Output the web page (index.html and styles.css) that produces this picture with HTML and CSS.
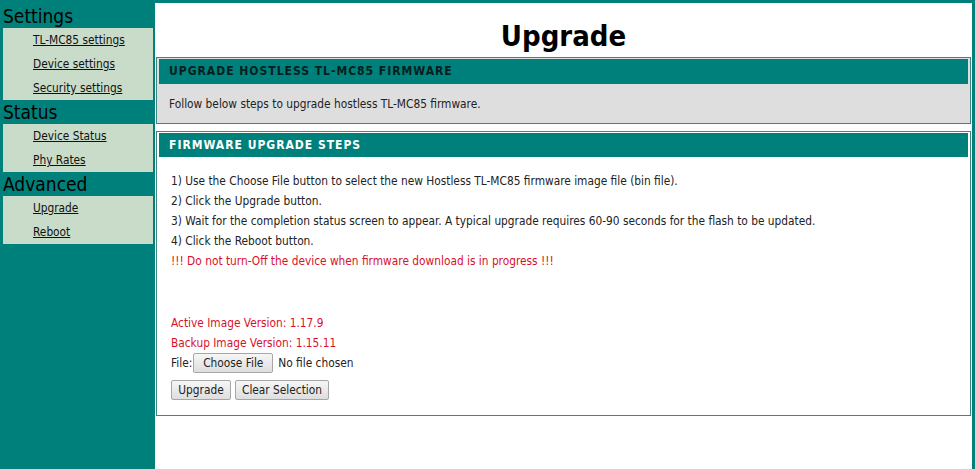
FILE: index.html
```html
<!DOCTYPE html>
<html lang="en">
<head>
<meta charset="utf-8">
<title>Upgrade</title>
<link rel="stylesheet" href="styles.css">
</head>
<body>
<div class="page">
  <nav class="nav">
    <div class="nav-head">Settings</div>
    <ul class="nav-list">
      <li><a href="#">TL-MC85 settings</a></li>
      <li><a href="#">Device settings</a></li>
      <li><a href="#">Security settings</a></li>
    </ul>
    <div class="nav-head">Status</div>
    <ul class="nav-list">
      <li><a href="#">Device Status</a></li>
      <li><a href="#">Phy Rates</a></li>
    </ul>
    <div class="nav-head">Advanced</div>
    <ul class="nav-list">
      <li><a href="#">Upgrade</a></li>
      <li><a href="#">Reboot</a></li>
    </ul>
  </nav>
  <main class="main">
    <h1 class="title">Upgrade</h1>
    <section class="box box-gray">
      <div class="box-head dark">UPGRADE HOSTLESS TL-MC85 FIRMWARE</div>
      <div class="box-body intro">Follow below steps to upgrade hostless TL-MC85 firmware.</div>
    </section>
    <section class="box">
      <div class="box-head">FIRMWARE UPGRADE STEPS</div>
      <div class="box-body steps">
        <p class="line">1) Use the Choose File button to select the new Hostless TL-MC85 firmware image file (bin file).</p>
        <p class="line">2) Click the Upgrade button.</p>
        <p class="line">3) Wait for the completion status screen to appear. A typical upgrade requires 60-90 seconds for the flash to be updated.</p>
        <p class="line">4) Click the Reboot button.</p>
        <p class="line red">!!! Do not turn-Off the device when firmware download is in progress !!!</p>
        <p class="line red gap">Active Image Version: 1.17.9</p>
        <p class="line red">Backup Image Version: 1.15.11</p>
        <div class="line file-row">
          <span>File:</span>
          <button class="btn btn-choose" type="button">Choose File</button>
          <span class="nofile">No file chosen</span>
        </div>
        <div class="actions">
          <button class="btn btn-up" type="button">Upgrade</button>
          <button class="btn btn-clear" type="button">Clear Selection</button>
        </div>
      </div>
    </section>
  </main>
</div>
</body>
</html>
```
FILE: styles.css
```css
html, body {
  margin: 0;
  padding: 0;
  height: 100%;
}
body {
  background: #00807b;
  font-family: "DejaVu Sans Condensed", "DejaVu Sans", sans-serif;
  color: #222;
  overflow: hidden;
}
.page {
  display: flex;
  height: 469px;
  padding: 0 3px 0 3px;
  gap: 2px;
}
.nav {
  width: 150px;
  flex: none;
  padding-top: 4px;
}
.nav-head {
  height: 24px;
  line-height: 25px;
  font-size: 19px;
  color: #000;
  margin-left: -3px;
  padding-left: 3px;
}
.nav-list {
  list-style: none;
  margin: 0;
  padding: 0;
  background: #c9dcc9;
}
.nav-list li {
  height: 24px;
  line-height: 24px;
  padding-left: 30px;
  font-size: 11.8px;
}
.nav-list a {
  color: #111;
  text-decoration: underline;
}
.main {
  flex: 1;
  margin-top: 3px;
  background: #fff;
  padding: 0 1px;
}
.title {
  margin: 0;
  padding-top: 16px;
  height: 34px;
  line-height: 34px;
  text-align: center;
  font-size: 29px;
  font-weight: bold;
  color: #000;
  margin-bottom: 4px;
}
.box {
  border: 1px solid #3d8580;
  padding: 1px;
  margin-bottom: 7px;
  background: #fff;
}
.box-gray {
  background: #dedede;
}
.box-head {
  height: 24px;
  line-height: 24px;
  background: #00807b;
  color: #fff;
  font-weight: bold;
  font-size: 12px;
  letter-spacing: 1px;
  padding-left: 10px;
  margin: 0 1px;
}
.box-gray .box-head {
  height: 25px;
  line-height: 25px;
}
.box-head.dark {
  color: #04201f;
}
.box-body {
  font-size: 11.8px;
  padding-left: 11px;
}
.intro {
  height: 38px;
  line-height: 40px;
  padding-left: 11px;
}
.steps {
  padding-top: 14px;
  padding-bottom: 14px;
  padding-left: 13px;
}
.line {
  margin: 0;
  height: 20px;
  line-height: 20px;
  white-space: nowrap;
}
.red {
  color: #d8102c;
}
.gap {
  margin-top: 42px;
}
.file-row {
  display: flex;
  align-items: center;
  gap: 1px;
}
.nofile {
  margin-left: 4px;
}
.actions {
  display: flex;
  gap: 4px;
  margin-top: 7px;
}
.btn {
  height: 20px;
  padding: 0;
  font-family: inherit;
  font-size: 11.8px;
  color: #222;
  background: linear-gradient(#f6f6f6, #dedede);
  border: 1px solid #a6a6a6;
  border-radius: 2px;
  line-height: 18px;
  white-space: nowrap;
  text-align: center;
}
.btn-choose { width: 80px; }
.btn-up { width: 60px; }
.btn-clear { width: 94px; }
```
